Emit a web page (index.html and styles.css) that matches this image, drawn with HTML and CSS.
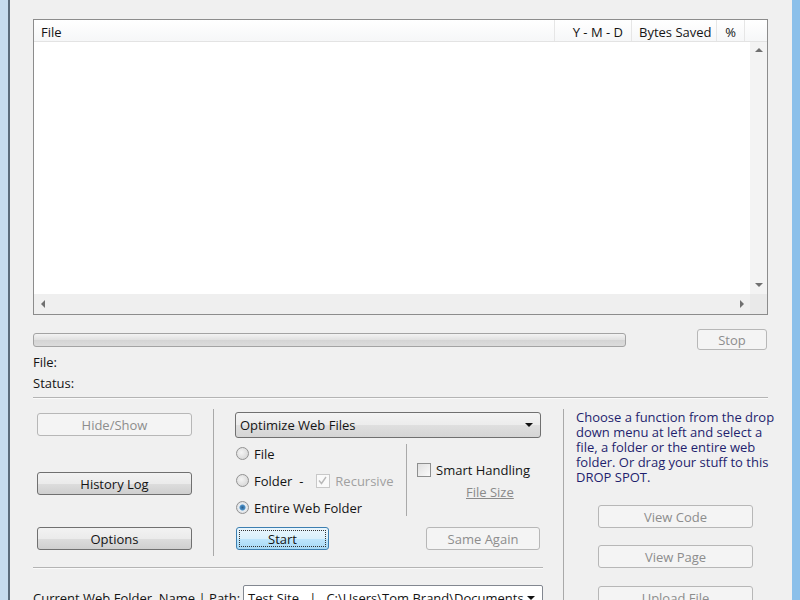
FILE: index.html
```html
<!DOCTYPE html>
<html lang="en">
<head>
    <meta charset="UTF-8">
    <title>Web File Optimizer</title>
    <link rel="stylesheet" href="styles.css">
</head>
<body>
    <div class="window">
        <div class="app">
            <div class="listbox">
                <div class="list-head">
                    <div class="col col-file">File</div>
                    <div class="col col-date">Y - M - D</div>
                    <div class="col col-bytes">Bytes Saved</div>
                    <div class="col col-pct">%</div>
                    <div class="col col-fill"></div>
                </div>
                <div class="list-body"></div>
                <div class="vscroll">
                    <span class="arrow arrow-up"></span>
                    <span class="arrow arrow-down"></span>
                </div>
                <div class="hscroll">
                    <span class="arrow arrow-left"></span>
                    <span class="arrow arrow-right"></span>
                </div>
                <div class="corner"></div>
            </div>

            <div class="progress-row">
                <div class="progress"></div>
                <button class="btn btn-stop" disabled>Stop</button>
            </div>

            <div class="info">
                <div>File:</div>
                <div>Status:</div>
            </div>
            <div class="rule"></div>

            <div class="lower">
                <div class="lower-main">
                    <div class="panels">
                        <div class="panel-left">
                            <button class="btn btn-side btn-hide" disabled>Hide/Show</button>
                            <button class="btn btn-side btn-history">History Log</button>
                            <button class="btn btn-side btn-options">Options</button>
                        </div>
                        <div class="panel-mid">
                            <div class="combo combo-func">Optimize Web Files<span class="combo-arrow"></span></div>
                            <div class="choices">
                                <div class="radios">
                                    <label class="radio-row"><span class="radio"></span>File</label>
                                    <label class="radio-row"><span class="radio"></span>Folder&nbsp; -
                                        <span class="check check-off"><svg viewBox="0 0 13 13" width="13" height="13"><path d="M3 6.5 L5.5 9.5 L10 3" fill="none" stroke="#b9b9b9" stroke-width="1.4"/></svg></span><span class="muted">Recursive</span></label>
                                    <label class="radio-row"><span class="radio radio-on"></span>Entire Web Folder</label>
                                </div>
                                <div class="vsep"></div>
                                <div class="smart">
                                    <label class="smart-row"><span class="check"></span>Smart Handling</label>
                                    <a class="smart-link">File Size</a>
                                </div>
                            </div>
                            <div class="start-row">
                                <button class="btn btn-start">Start</button>
                                <button class="btn btn-again" disabled>Same Again</button>
                            </div>
                        </div>
                    </div>
                    <div class="rule rule-short"></div>
                    <div class="path-row">
                        <span class="path-label">Current Web Folder, Name | Path:</span>
                        <div class="combo combo-path">Test Site &nbsp; | &nbsp; C:\Users\Tom Brand\Documents<span class="combo-arrow"></span></div>
                    </div>
                </div>
                <div class="panel-right">
                    <p class="hint">Choose a function from the drop<br>down menu at left and select a<br>file, a folder or the entire web<br>folder. Or drag your stuff to this<br>DROP SPOT.</p>
                    <button class="btn btn-side btn-code" disabled>View Code</button>
                    <button class="btn btn-side btn-page" disabled>View Page</button>
                    <button class="btn btn-side btn-upload" disabled>Upload File</button>
                </div>
            </div>
        </div>
    </div>
</body>
</html>
```

FILE: styles.css
```css
html, body {
margin: 0;
height: 600px;
overflow: hidden;
}

body {
font-family: "Open Sans", "Noto Sans", sans-serif;
font-size: 13px;
color: #141414;
background: #f0f0f0;
}

/* window frame: dark edge + pale blue on the left, bright blue on the right */
.window {
box-sizing: border-box;
height: 600px;
border-left: 8px solid #c6dbef;
border-right: 8px solid #8cc0ea;
box-shadow: inset 2px 0 0 #5b6b7c;
background: #f0f0f0;
}

.app {
padding: 19px 24px 0 25px;
}

/* list */
.listbox {
height: 294px;
border: 1px solid #8c8c8c;
background: #fff;
display: grid;
grid-template-columns: 1fr 17px;
grid-template-rows: 22px 1fr 20px;
}

.list-head {
grid-column: 1 / 3;
display: flex;
background: linear-gradient(#ffffff, #f6f7f8);
border-bottom: 1px solid #e3e3e3;
}

.col {
box-sizing: border-box;
line-height: 22px;
padding: 1px 8px 0 7px;
border-right: 1px solid #e6e6e6;
text-align: right;
white-space: nowrap;
}

.col-file {
flex: 1;
text-align: left;
}

.col-date { width: 77px; }
.col-bytes { width: 85px; }
.col-pct { width: 28px; }

.col-fill {
width: 22px;
padding: 0;
border-right: none;
}

.vscroll {
position: relative;
background: #f3f3f3;
}

.hscroll {
position: relative;
background: #efefef;
}

.corner {
background: #e9e9e9;
}

.arrow {
position: absolute;
width: 0;
height: 0;
}

.arrow-up {
top: 6px;
left: 5px;
border: 4px solid transparent;
border-bottom: 4px solid #707070;
border-top: none;
}

.arrow-down {
bottom: 7px;
left: 5px;
border: 4px solid transparent;
border-top: 4px solid #707070;
border-bottom: none;
}

.arrow-left {
left: 7px;
top: 6px;
border: 4px solid transparent;
border-right: 4px solid #707070;
border-left: none;
}

.arrow-right {
right: 6px;
top: 6px;
border: 4px solid transparent;
border-left: 4px solid #707070;
border-right: none;
}

/* progress */
.progress-row {
display: flex;
align-items: center;
justify-content: space-between;
margin-top: 14px;
height: 21px;
}

.progress {
width: 591px;
height: 12px;
border: 1px solid #a3a3a3;
border-radius: 3px;
background: linear-gradient(#f3f3f3, #e0e0e0 50%, #d4d4d4 51%, #dcdcdc);
}

.btn {
font-family: inherit;
font-size: 13px;
height: 23px;
padding: 1px 0 0;
border: 1px solid #707070;
border-radius: 3px;
color: #141414;
background: linear-gradient(#f2f2f2, #ebebeb 50%, #dddddd 51%, #cfcfcf);
}

.btn:disabled {
color: #8d8d8d;
border-color: #b7b7b7;
background: #f4f4f4;
}

.btn-stop {
width: 70px;
height: 21px;
margin-right: 1px;
}

/* status */
.info {
margin-top: 2px;
line-height: 21px;
}

.rule {
margin-top: 3px;
border-top: 1px solid #b4b4b4;
border-bottom: 1px solid #fafafa;
}

.rule-short {
width: 510px;
margin-top: 11px;
}

.lower {
display: flex;
margin-top: 10px;
}

.lower-main {
width: 530px;
}

.panels {
display: flex;
}

.panel-left {
width: 180px;
height: 147px;
display: flex;
flex-direction: column;
align-items: flex-start;
}

.btn-side {
width: 155px;
margin-left: 4px;
}

.btn-hide { margin-top: 4px; }
.btn-history { margin-top: 36px; }
.btn-options { margin-top: 32px; }

.panel-mid {
width: 328px;
height: 147px;
border-left: 1px solid #a9a9a9;
padding-left: 21px;
}

.combo {
position: relative;
box-sizing: border-box;
border: 1px solid #707070;
border-radius: 3px;
background: linear-gradient(#f4f4f4, #ececec 50%, #dfdfdf 51%, #d5d5d5);
padding-left: 4px;
white-space: nowrap;
overflow: hidden;
}

.combo-func {
margin-top: 3px;
width: 306px;
height: 26px;
line-height: 25px;
}

.combo-arrow {
position: absolute;
right: 7px;
top: 10px;
border: 4px solid transparent;
border-top: 4px solid #111;
border-bottom: none;
}

.choices {
display: flex;
height: 81px;
margin-top: 2px;
}

.radios {
width: 171px;
}

.radio-row {
display: flex;
align-items: center;
height: 27px;
}

.radio {
box-sizing: border-box;
width: 13px;
height: 13px;
border: 1px solid #929292;
border-radius: 50%;
margin: 0 5px 0 1px;
background: radial-gradient(circle at 40% 40%, #f4f4f4, #d0d0d0);
}

.radio-on {
background: radial-gradient(circle, #2c5d8a 0, #4a90c8 2.5px, #e9eef3 3.5px, #d3d3d3);
}

.vsep {
width: 1px;
height: 72px;
margin-top: 4px;
background: #a9a9a9;
}

.check {
box-sizing: border-box;
display: inline-block;
width: 14px;
height: 14px;
border: 1px solid #8e8f8f;
background: linear-gradient(135deg, #e0e0e0, #fafafa);
margin-right: 5px;
}

.check-off {
border-color: #c8c8c8;
background: #fafafa;
margin-left: 13px;
}

.check-off svg {
display: block;
margin: -1px;
}

.muted {
color: #a0a0a0;
}

.smart {
padding: 21px 0 0 10px;
}

.smart-row {
display: flex;
align-items: center;
}

.smart-link {
display: block;
margin: 4px 0 0 49px;
color: #8a8a8a;
text-decoration: underline;
}

.start-row {
display: flex;
justify-content: space-between;
width: 305px;
margin-top: 6px;
}

.btn-start {
width: 93px;
margin-left: 1px;
border-color: #3c7fb1;
background: linear-gradient(#eaf6fd, #d9f0fc 50%, #bee6fd 51%, #a7d9f5);
outline: 1px dotted #333;
outline-offset: -4px;
}

.btn-again {
width: 114px;
}

.path-row {
display: flex;
align-items: center;
margin-top: 16px;
}

.path-label {
width: 210px;
white-space: nowrap;
}

.combo-path {
width: 300px;
height: 26px;
line-height: 25px;
background: #fff;
border-color: #828790;
border-radius: 2px;
}

.panel-right {
flex: 1;
border-left: 1px solid #a9a9a9;
height: 200px;
padding-left: 12px;
display: flex;
flex-direction: column;
}

.hint {
margin: 1px 0 0;
line-height: 15px;
color: #1f1f6e;
white-space: nowrap;
}

.btn-code { margin: 20px 0 0 22px; }
.btn-page { margin: 17px 0 0 22px; }
.btn-upload { margin: 18px 0 0 22px; }
```
